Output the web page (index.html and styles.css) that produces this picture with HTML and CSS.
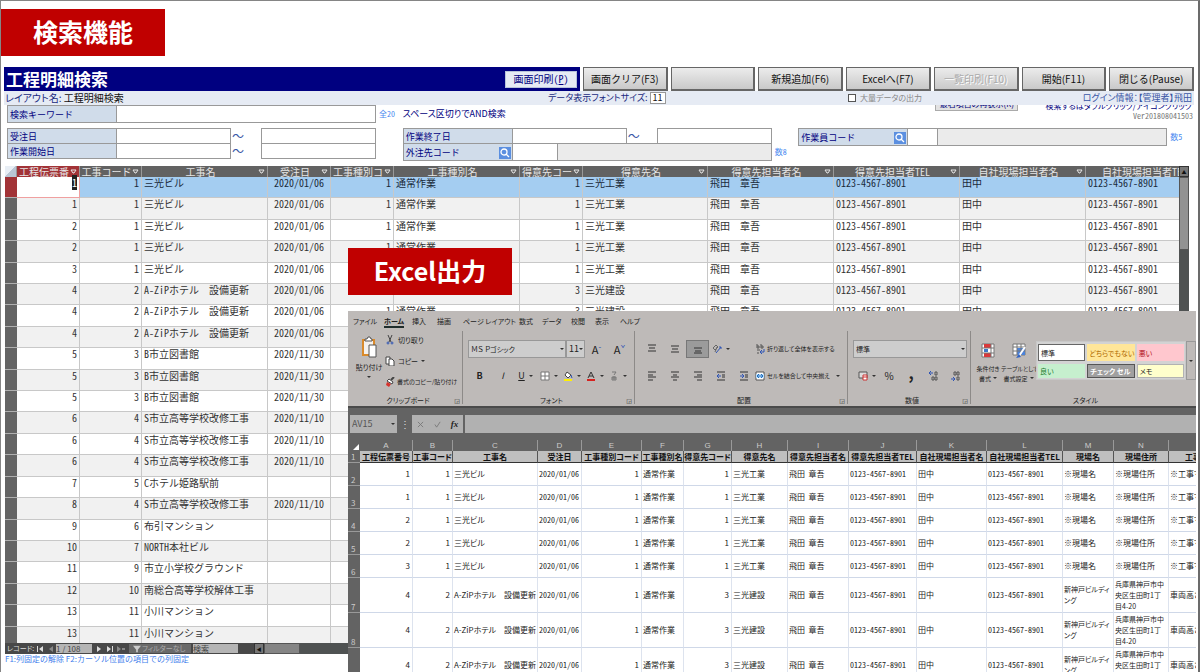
FILE: index.html
```html
<!DOCTYPE html>
<html lang="ja">
<head>
    <meta charset="UTF-8">
    <meta name="viewport" content="width=device-width, initial-scale=1.0">
    <title>工程明細検索</title>
    <link rel="stylesheet" href="styles.css">
</head>
<body>
<div class="slide">
    <h1 class="banner">検索機能</h1>

    <main class="app">
        <header class="top">
            <div class="title-bar">
                <h2>工程明細検索</h2>
                <button class="print" type="button">画面印刷(<u>P</u>)</button>
            </div>
            <div class="commands">
                <button type="button">画面クリア(F3)</button>
                <button type="button" aria-label="未設定"></button>
                <button type="button">新規追加(F6)</button>
                <button type="button">Excelへ(F7)</button>
                <button type="button" disabled>一覧印刷(F10)</button>
                <button type="button">開始(F11)</button>
                <button type="button">閉じる(Pause)</button>
            </div>
        </header>

        <div class="info">
            <div class="layout-name">レイアウト名: <b>工程明細検索</b></div>
            <label class="font-size">データ表示フォントサイズ: <input type="text" value="11"></label>
            <label class="bulk"><input type="checkbox">大量データの出力</label>
            <div class="login">ログイン情報：【管理者】飛田</div>
        </div>

        <form class="search">
            <div class="field keyword">
                <label class="name" for="keyword">検索キーワード</label>
                <input class="box" id="keyword" type="text">
                <span class="note">全20</span>
            </div>
            <p class="hint">スペース区切りでAND検索</p>
            <div class="side">
                <div class="cut">
                    <button type="button">最右項目の再表示(R)</button>
                    <span>検索するはダブルクリック/アイコンクリック</span>
                </div>
                <p class="version">Ver201808041503</p>
            </div>

            <div class="fields">
                <div class="field range">
                    <label class="name" for="order1">受注日</label>
                    <input class="box" id="order1" type="text"><span>～</span>
                    <input class="box" type="text" aria-label="受注日（終了）">
                </div>
                <div class="field range">
                    <label class="name" for="start1">作業開始日</label>
                    <input class="box" id="start1" type="text"><span>～</span>
                    <input class="box" type="text" aria-label="作業開始日（終了）">
                </div>
            </div>
            <div class="fields">
                <div class="field range">
                    <label class="name" for="end1">作業終了日</label>
                    <input class="box" id="end1" type="text"><span>～</span>
                    <input class="box" type="text" aria-label="作業終了日（終了）">
                </div>
                <div class="field code">
                    <div class="name"><label for="vendor">外注先コード</label>
                        <button class="find" type="button" aria-label="外注先を検索"><svg viewBox="0 0 12 12"><circle cx="5" cy="5" r="3"/><path d="M7 7l3 3"/></svg></button>
                    </div>
                    <input class="box" id="vendor" type="text">
                    <input class="box" type="text" readonly aria-label="外注先名">
                    <span class="note">数8</span>
                </div>
            </div>
            <div class="fields">
                <div class="field code worker">
                    <div class="name"><label for="worker">作業員コード</label>
                        <button class="find" type="button" aria-label="作業員を検索"><svg viewBox="0 0 12 12"><circle cx="5" cy="5" r="3"/><path d="M7 7l3 3"/></svg></button>
                    </div>
                    <input class="box" id="worker" type="text">
                    <input class="box" type="text" readonly aria-label="作業員名">
                    <span class="note">数5</span>
                </div>
            </div>
        </form>

        <section class="datasheet">
            <div class="sheet-view">
                <table class="records">
                    <colgroup>
                        <col class="w12"><col class="w63"><col class="w62"><col class="w126"><col class="w63"><col class="w63"><col class="w126">
                        <col class="w63"><col class="w125"><col class="w126"><col class="w126"><col class="w126"><col class="w126">
                    </colgroup>
                    <thead><tr id="record-head"></tr></thead>
                    <tbody id="record-body"></tbody>
                </table>
            </div>
            <div class="vscroll"><i>▲</i><b></b></div>
        </section>

        <div class="navigator">
            <span class="rec">レコード:</span>
            <button type="button" aria-label="先頭"><svg viewBox="0 0 8 8"><path d="M1 1h1v6H1zM7 1v6L3 4z"/></svg></button>
            <button type="button" aria-label="前へ" disabled><svg viewBox="0 0 8 8"><path d="M6 1v6L2 4z"/></svg></button>
            <input class="pos" type="text" value="1 / 108" aria-label="レコード番号">
            <button type="button" aria-label="次へ"><svg viewBox="0 0 8 8"><path d="M2 1v6l4-3z"/></svg></button>
            <button type="button" aria-label="最後"><svg viewBox="0 0 8 8"><path d="M1 1v6l4-3zM6 1h1v6H6z"/></svg></button>
            <button type="button" aria-label="新規" disabled><svg viewBox="0 0 8 8"><path d="M0 1v6l4-3zM5 3h3v2H5z"/></svg></button>
            <button class="filter" type="button"><svg viewBox="0 0 10 8"><path d="M0 0h10L6 5v3H4V5z"/></svg>フィルターなし</button>
            <input class="seek" type="text" value="検索" aria-label="レコードの検索">
            <div class="hscroll"><i>◀</i><b></b></div>
        </div>
        <p class="keys">F1:列固定の解除 F2:カーソル位置の項目での列固定</p>
    </main>

    <section class="excel">
        <nav class="tabs">
            <a href="#">ファイル</a><a href="#" class="on">ホーム</a><a href="#">挿入</a><a href="#">描画</a><a href="#">ページ レイアウト</a><a href="#">数式</a><a href="#">データ</a><a href="#">校閲</a><a href="#">表示</a><a href="#">ヘルプ</a>
        </nav>

        <div class="ribbon">
            <div class="group clipboard">
                <button class="paste" type="button">
                    <svg viewBox="0 0 16 22"><rect x="2" y="4" width="11" height="15" fill="#f4f1ee" stroke="#d98a2b" stroke-width="2"/><path d="M4 5V3h2l1-2h2l1 2h1v2z" fill="#fff" stroke="#555"/><path d="M8 9h7v12H8z" fill="#fff" stroke="#555"/></svg>
                    <span>貼り付け</span>
                    <em class="caret"></em>
                </button>
                <div class="stack">
                    <button type="button"><svg viewBox="0 0 10 10"><path d="M3 0l3 7M7 0L4 7" stroke="#444"/><circle cx="3" cy="8" r="1" stroke="#2f55b5"/><circle cx="7" cy="8" r="1" stroke="#2f55b5"/></svg>切り取り</button>
                    <button type="button"><svg viewBox="0 0 10 10"><path d="M1 1h4v7H1z" fill="#fff" stroke="#444"/><path d="M4 3h3l2 2v5H4z" fill="#fff" stroke="#444"/></svg>コピー<em class="caret"></em></button>
                    <button type="button" class="long"><svg viewBox="0 0 10 10"><path d="M6 3l3-3" stroke="#444" stroke-width="2"/><path d="M4 2l4 3-1 2-5-3z" fill="#fff" stroke="#444"/><path d="M2 5l4 2-2 3-3-2z" fill="#d6322d"/></svg>書式のコピー/貼り付け</button>
                </div>
                <div class="caption">クリップボード</div>
            </div>

            <div class="group">
                <div class="row fonts">
                    <span class="combo face"><select aria-label="フォント"><option>ＭＳ Ｐゴシック</option></select><em class="caret"></em></span>
                    <span class="combo size"><select aria-label="フォント サイズ"><option>11</option></select><em class="caret"></em></span>
                    <button class="letter" type="button" aria-label="拡大">A<sup>ˆ</sup></button>
                    <button class="letter" type="button" aria-label="縮小">A<sup>ˇ</sup></button>
                </div>
                <div class="row tools">
                    <button type="button"><b>B</b></button>
                    <button type="button"><i>I</i></button>
                    <button type="button"><u>U</u><em class="caret"></em></button>
                    <button type="button" aria-label="罫線"><svg viewBox="0 0 10 10"><path d="M1 1h8v8H1z" fill="#fff" stroke="#777"/><path d="M5 1v8M1 5h8" stroke="#777"/></svg><em class="caret"></em></button>
                    <button type="button" aria-label="塗りつぶし"><svg viewBox="0 0 10 10"><path d="M4 1l4 3-3 3-3-3z" fill="#fff" stroke="#444"/><path d="M8 4l1 3" stroke="#2f55b5"/><path d="M1 8h8v2H1z" fill="#fff000"/></svg><em class="caret"></em></button>
                    <button type="button" aria-label="文字の色"><svg viewBox="0 0 10 10"><path d="M2 7l3-6 3 6M3 5h4" stroke="#333"/><path d="M1 8h8v2H1z" fill="#d6221f"/></svg><em class="caret"></em></button>
                    <button type="button" aria-label="ふりがな"><svg viewBox="0 0 10 10"><path d="M3 1h4L5 4M3 6h4v3H3zM5 5v4M3 7h4" stroke="#777"/></svg><em class="caret"></em></button>
                </div>
                <div class="caption">フォント</div>
            </div>

            <div class="group align">
                <div class="row tools">
                    <button type="button" aria-label="上揃え"><svg viewBox="0 0 10 10"><path d="M1 1h8M2 4h6M1 7h8" stroke="#333"/></svg></button>
                    <button type="button" aria-label="中央揃え"><svg viewBox="0 0 10 10"><path d="M1 2h8M2 5h6M1 8h8" stroke="#333"/></svg></button>
                    <button type="button" class="down" aria-label="下揃え"><svg viewBox="0 0 10 10"><path d="M1 4h8M2 7h6M1 9h8" stroke="#333"/></svg></button>
                    <button type="button" aria-label="方向"><svg viewBox="0 0 10 10"><path d="M1 4l3-3 2 2-3 3zM3 8l2-5" stroke="#666"/><path d="M4 9l5-6M7 3h2v2" stroke="#2f55b5"/></svg><em class="caret"></em></button>
                    <span></span>
                    <button type="button" class="long"><svg viewBox="0 0 10 10"><path d="M2 0v4h2V2H2M6 0v4h2V2H6M2 6h3M2 9h2" stroke="#555"/><path d="M9 5v3H5m2-2L5 8l2 2" stroke="#2f55b5"/></svg>折り返して全体を表示する</button>
                </div>
                <div class="row tools">
                    <button type="button" aria-label="左揃え"><svg viewBox="0 0 10 10"><path d="M1 1h8M1 4h5M1 6h8M1 9h5" stroke="#333"/></svg></button>
                    <button type="button" aria-label="左右中央揃え"><svg viewBox="0 0 10 10"><path d="M1 1h8M3 4h4M1 6h8M3 9h4" stroke="#333"/></svg></button>
                    <button type="button" aria-label="右揃え"><svg viewBox="0 0 10 10"><path d="M1 1h8M4 4h5M1 6h8M4 9h5" stroke="#333"/></svg></button>
                    <button type="button" aria-label="インデントを減らす"><svg viewBox="0 0 10 10"><path d="M1 1h8M6 4h3M6 6h3M1 9h8" stroke="#333"/><path d="M5 5H1m2-2L1 5l2 2" stroke="#2f55b5"/></svg></button>
                    <button type="button" aria-label="インデントを増やす"><svg viewBox="0 0 10 10"><path d="M1 1h8M6 4h3M6 6h3M1 9h8" stroke="#333"/><path d="M1 5h4M3 3l2 2-2 2" stroke="#2f55b5"/></svg></button>
                    <button type="button" class="long"><svg viewBox="0 0 10 10"><path d="M1 1h8v8H1z" fill="#fff" stroke="#555"/><path d="M1 3h8v4H1z" fill="#bcdcf7"/><path d="M2 5h6M4 3L2 5l2 2M6 3l2 2-2 2" stroke="#1f6fc0"/></svg>セルを結合して中央揃え<em class="caret far"></em></button>
                </div>
                <div class="caption">配置</div>
            </div>

            <div class="group number">
                <div class="row">
                    <span class="combo format"><select aria-label="表示形式"><option>標準</option></select><em class="caret"></em></span>
                </div>
                <div class="row tools">
                    <button type="button" aria-label="通貨"><svg viewBox="0 0 10 10"><path d="M1 1h8v6H1z" fill="#ddd" stroke="#555"/><path d="M5 4h4v5H5zM5 6h4" fill="#fff" stroke="#c33"/></svg><em class="caret"></em></button>
                    <button type="button" class="sign">%</button>
                    <button type="button" class="sign comma">,</button>
                    <button type="button" aria-label="小数点以下を増やす"><svg viewBox="0 0 10 10"><path d="M5 2H1m2-2L1 2l2 2" stroke="#2f55b5"/><path d="M7 1h2v3H7zM4 6h2v3H4zM7 6h2v3H7z" stroke="#555"/></svg></button>
                    <button type="button" aria-label="小数点以下を減らす"><svg viewBox="0 0 10 10"><path d="M4 1h2v3H4zM7 1h2v3H7zM7 6h2v3H7z" stroke="#555"/><path d="M1 8h4M3 6l2 2-2 2" stroke="#2f55b5"/></svg></button>
                </div>
                <div class="caption">数値</div>
            </div>

            <div class="group styles">
                <button type="button" class="big"><svg viewBox="0 0 14 15"><path d="M1 1h12v13H1z" fill="#fff" stroke="#777"/><path d="M3 1h7v4H3zM3 10h7v4H3z" fill="#d8393b"/><path d="M3 6h4v3H3z" fill="#3e79c9"/><path d="M1 5h12M1 10h12M10 1v13" stroke="#777"/></svg>条件付き<br>書式<em class="caret"></em></button>
                <button type="button" class="big"><svg viewBox="0 0 14 15"><path d="M1 1h12v11H1z" fill="#fff" stroke="#777"/><path d="M5 5h8v7H5z" fill="#4a83dc"/><path d="M1 4h12M1 8h12M5 1v11M9 1v11" stroke="#777"/><path d="M13 4l-6 9" stroke="#fff" stroke-width="2"/><path d="M7 11l-3 4 5-1z" fill="#2f62c4"/></svg>テーブルとして<br>書式設定<em class="caret"></em></button>
                <div class="gallery">
                    <button type="button" class="normal">標準</button>
                    <button type="button" class="neutral">どちらでもない</button>
                    <button type="button" class="bad">悪い</button>
                    <button type="button" class="good">良い</button>
                    <button type="button" class="check">チェック セル</button>
                    <button type="button" class="memo">メモ</button>
                </div>
                <button type="button" class="more" aria-label="その他"><em class="caret"></em></button>
                <div class="caption">スタイル</div>
            </div>
        </div>

        <div class="formula-bar">
            <span class="combo cell-ref"><select aria-label="名前ボックス"><option>AV15</option></select><em class="caret"></em></span>
            <span class="dots">⋮</span>
            <div class="entry">
                <button type="button" aria-label="キャンセル"><svg viewBox="0 0 8 8"><path d="M1 1l6 6M7 1L1 7"/></svg></button>
                <button type="button" aria-label="入力"><svg viewBox="0 0 8 8"><path d="M1 4l2 3 4-6"/></svg></button>
                <button type="button" class="fx">fx</button>
            </div>
            <input type="text" class="formula" aria-label="数式バー">
        </div>

        <table class="book">
            <colgroup id="book-cols"></colgroup>
            <thead><tr id="book-letters"></tr></thead>
            <tbody id="book-body"></tbody>
        </table>
    </section>

    <h1 class="banner over">Excel出力</h1>
</div>
<script src="script.js"></script>
</body>
</html>
```
FILE: styles.css
```css
* {
    box-sizing: border-box;
}
body {
    margin: 0;
    font-family: "Noto Sans Mono CJK JP", "Noto Sans CJK JP", sans-serif;
    font-size: 10px;
    line-height: 12px;
    color: #333;
    background: #fff;
}
h1, h2, p {
    margin: 0;
}
button, input, select {
    font: inherit;
    color: inherit;
    margin: 0;
    padding: 0;
    border-radius: 0;
    min-width: 0;
}
button {
    border: 0;
    background: none;
    white-space: nowrap;
}
svg {
    display: block;
    fill: none;
}
.slide {
    position: relative;
    display: flex;
    flex-direction: column;
    height: 100vh;
    overflow: hidden;
    border: 1px solid #858585;
    border-right: 2px solid #6b6b6b;
    border-bottom: 0;
}
.banner {
    flex: none;
    width: 164px;
    height: 47px;
    margin-top: 8px;
    background: #c00000;
    color: #fff;
    font: bold 25px/44px "Noto Sans CJK JP", sans-serif;
    text-align: center;
}
.banner.over {
    position: absolute;
    left: 347px;
    top: 239px;
}

/* 検索画面 */
.app {
    flex: 1;
    min-height: 0;
    display: flex;
    flex-direction: column;
    padding: 11px 4px 0 3px;
}
.top {
    display: flex;
    gap: 3px;
    height: 24px;
}
.title-bar {
    flex: 1;
    display: flex;
    align-items: center;
    justify-content: space-between;
    padding: 0 3px 0 2px;
    background: #000080;
}
.title-bar h2 {
    color: #fff;
    font: bold 17px/22px "Noto Sans CJK JP", sans-serif;
}
.print {
    width: 72px;
    height: 17px;
    background: #e6ebf4;
    border: 1px solid #b8c4da;
    color: #000080;
    font-size: 10px;
}
.commands {
    flex: 0 0 611px;
    display: grid;
    grid-template-columns: repeat(7, 1fr);
    gap: 3px;
}
.commands button {
    border: 1px solid #666;
    border-width: 1px 2px 2px 1px;
    background: linear-gradient(#ececec, #c9c9c9);
    color: #111;
    font: 10px/20px "Noto Sans CJK JP", sans-serif;
}
.commands button:disabled {
    color: #aaa;
    text-shadow: 1px 1px #fff;
}
.info {
    display: grid;
    grid-template-columns: 544px 300px 1fr auto;
    align-items: center;
    height: 14px;
    padding-right: 2px;
    background: #e6ebf4;
    color: #1a2a80;
    font-family: "Noto Sans CJK JP", sans-serif;
    font-feature-settings: "palt";
}
.info b {
    font-weight: normal;
    color: #111;
}
.layout-name {
    padding-left: 1px;
}
.font-size {
    display: flex;
    font-size: 9px;
    gap: 2px;
}
.font-size input {
    width: 16px;
    height: 12px;
    border: 1px solid #999;
    background: #fff;
    color: #111;
    text-align: center;
}
.bulk {
    display: flex;
    align-items: center;
    gap: 4px;
    color: #888;
    font-size: 8px;
}
.bulk input {
    appearance: none;
    width: 8px;
    height: 8px;
    border: 1px solid #555;
    background: #fff;
}
.login {
    font-size: 9px;
    color: #3a56a5;
}
.search {
    display: grid;
    grid-template-columns: repeat(3, 1fr);
    grid-template-rows: 16px 31px;
    row-gap: 7px;
    padding: 0 0 0 3px;
    color: #000080;
}
.field {
    display: grid;
    grid-template-columns: 109px 260px 1fr;
    height: 16px;
}
.field.range {
    grid-template-columns: 109px 115px 30px 115px;
}
.field.code {
    grid-template-columns: 109px 46px 214px 1fr;
}
.field.worker {
    grid-template-columns: 109px 31px 229px 1fr;
}
.field + .field {
    margin-top: -1px;
}
.field .name {
    display: flex;
    align-items: center;
    justify-content: space-between;
    padding: 1px 1px 0 2px;
    border: 1px solid #999;
    border-right: 0;
    background: #d0dcea;
    font-family: "Noto Sans CJK JP", sans-serif;
    font-size: 9px;
}
.range > span {
    padding-left: 1px;
    color: #3a56a5;
    font-size: 12px;
    font-weight: 300;
    line-height: 16px;
}
.box {
    border: 1px solid #999;
    background: #fff;
}
.box[readonly] {
    margin-left: -1px;
    background: #ebebeb;
}
.note {
    padding-left: 3px;
    color: #4a8af0;
    font-size: 8px;
    line-height: 18px;
}
.find {
    width: 12px;
    height: 12px;
    background: #5b8fe0;
}
.find svg {
    stroke: #fff;
    stroke-width: 1.3;
}
.hint {
    font: 9px/18px "Noto Sans CJK JP", sans-serif;
    font-feature-settings: "palt";
}
.cut {
    display: grid;
    grid-template: 6px / 83px auto;
    justify-content: space-between;
    align-items: end;
    height: 6px;
    margin-left: 137px;
    padding-right: 2px;
    overflow: hidden;
    font-family: "Noto Sans CJK JP", sans-serif;
    font-size: 8px;
    font-feature-settings: "palt";
    line-height: 10px;
    white-space: nowrap;
}
.cut button {
    height: 14px;
    border: 1px solid #aaa;
    background: #e2e2e2;
    line-height: 10px;
}
.version {
    padding-right: 1px;
    color: #777;
    font-size: 8px;
    line-height: 9px;
    text-align: right;
}

/* データシート */
.datasheet {
    flex: 1;
    min-height: 0;
    display: flex;
    margin: 7px 5px 0 1px;
    overflow: hidden;
}
.sheet-view {
    flex: 1;
    overflow: hidden;
}
table {
    border-collapse: separate;
    border-spacing: 0;
    table-layout: fixed;
}
th, td {
    padding: 0;
    white-space: nowrap;
}
.records {
    width: 1207px;
    height: 482px;
}
.w12 { width: 12px; }
.w62 { width: 62px; }
.w63 { width: 63px; }
.w125 { width: 125px; }
.w126 { width: 126px; }
.records thead th {
    height: 11px;
    background: #626262;
    border-right: 1px solid #999;
    color: #e6e6e6;
    font-weight: normal;
    line-height: 11px;
}
.records thead .corner {
    background: linear-gradient(135deg, #e8eef5 50%, #b9c6d4 50%);
}
.records thead .active {
    background: #a23337;
}
.head {
    display: flex;
    align-items: center;
    height: 11px;
    padding: 0 2px 0 1px;
}
.head span {
    flex: 1;
}
.head svg {
    flex: none;
    width: 7px;
    height: 5px;
    stroke: #e6e6e6;
}
.records td {
    padding: 0 2px;
    border-right: 1px solid #c8c8c8;
    border-bottom: 1px solid #c8c8c8;
    vertical-align: top;
}
.records tbody th {
    background: #646464;
    border-bottom: 1px solid #b0b0b0;
}
.records tr:nth-child(even) td {
    background: #f1f1f1;
}
.records .current td {
    background: #a4cdf1;
    color: #1a2a3a;
}
.records .current th {
    background: #a23337;
}
.records .current .focus {
    background: #fff;
    border: 1px solid #f0a0a0;
    border-top: 0;
    border-left: 0;
}
.focus mark {
    background: #222;
    color: #fff;
}
.records .num {
    text-align: right;
}
.records .date {
    text-align: center;
}
.vscroll {
    display: flex;
    flex-direction: column;
    width: 10px;
    background: #4f5252;
}
.vscroll i, .hscroll i {
    height: 11px;
    color: #111;
    background: #777;
    border: 1px solid #333;
    font-size: 5px;
    font-style: normal;
    line-height: 9px;
    text-align: center;
}
.vscroll b {
    height: 73px;
    background: #929292;
    border: 1px solid #555;
}
.navigator {
    display: flex;
    align-items: center;
    height: 11px;
    margin: 0 5px 0 1px;
    background: #484848;
    color: #ddd;
    font-family: "Noto Sans CJK JP", sans-serif;
    font-size: 8px;
    font-feature-settings: "palt";
    line-height: 11px;
    white-space: nowrap;
}
.navigator svg {
    width: 8px;
    height: 8px;
    margin: auto;
    fill: #ddd;
}
.navigator button {
    flex: none;
    width: 11px;
}
.navigator button:disabled svg {
    fill: #888;
}
.navigator .rec {
    flex: none;
    width: 29px;
    padding-left: 2px;
    font-size: 7px;
}
.navigator input {
    height: 9px;
    border: 0;
    background: #b5b5b5;
    color: #444;
}
.pos {
    flex: none;
    width: 36px;
    margin-right: 1px;
}
.navigator .filter {
    display: flex;
    gap: 1px;
    align-items: center;
    width: 62px;
    height: 9px;
    margin: 0 2px 0 3px;
    padding-left: 4px;
    background: #6a6a6a;
    color: #aaa;
    font-size: 7px;
    line-height: 9px;
}
.navigator .filter svg {
    flex: none;
    margin: 0;
    fill: #ccc;
}
.seek {
    flex: none;
    width: 45px;
}
.hscroll {
    flex: 1;
    display: flex;
    margin-left: 16px;
    background: #4f5252;
}
.hscroll i {
    width: 10px;
}
.hscroll b {
    width: 36px;
    background: #858585;
    border: 1px solid #555;
}
.keys {
    height: 18px;
    padding-left: 1px;
    color: #3f80ec;
    font-family: "Noto Sans CJK JP", sans-serif;
    font-size: 8px;
    line-height: 10px;
}

/* Excel ウィンドウ */
.excel {
    position: absolute;
    left: 347px;
    right: 2px;
    top: 310px;
    bottom: 0;
    overflow: hidden;
    background: #fff;
    font-family: "Noto Sans CJK JP", sans-serif;
    font-size: 8px;
    line-height: 10px;
}
.tabs {
    display: grid;
    grid-template-columns: 31px 28px 25px 26px 56px 23px 29px 24px 25px auto;
    align-items: center;
    height: 20px;
    padding-left: 5px;
    background: #bebab8;
    font-size: 7px;
    font-feature-settings: "palt";
    white-space: nowrap;
}
.tabs a {
    justify-self: start;
    padding-top: 1px;
    color: #222;
    text-decoration: none;
    border-bottom: 2px solid transparent;
}
.tabs .on {
    font-weight: bold;
    border-color: #1f2d2b;
}
.ribbon {
    display: grid;
    grid-template-columns: 115px 172px 213px 123px 1fr;
    height: 77px;
    background: #bebab8;
    border-bottom: 2px solid #4a4a4a;
    color: #222;
    font-size: 7px;
    font-feature-settings: "palt";
}
.group {
    position: relative;
    display: grid;
    grid-template: 36px 18px 20px / minmax(0, 1fr);
    padding-left: 5px;
}
.group:not(.styles)::after {
    content: "";
    position: absolute;
    right: 0;
    top: 0;
    bottom: 2px;
    border-right: 1px solid #8d8a88;
}
.group:not(.styles) .caption::after {
    content: "◲";
    position: absolute;
    right: 3px;
    bottom: 1px;
    font: 6px/8px "DejaVu Sans", sans-serif;
}
.caption {
    align-self: end;
    justify-self: center;
    line-height: 10px;
}
.group svg {
    flex: none;
    width: 10px;
    height: 10px;
}
.caret {
    flex: none;
    width: 0;
    height: 0;
    border: 2px solid transparent;
    border-top-color: #333;
    border-bottom: 0;
}
.caret.far {
    margin-left: 4px;
}
.row {
    display: flex;
    align-items: center;
}
.row.tools {
    display: grid;
    grid-template-columns: repeat(7, 23px);
}
.row button, .stack button {
    display: flex;
    align-items: center;
    justify-content: center;
    gap: 4px;
    height: 18px;
    font-size: 9px;
}
.row.tools .long, .stack .long {
    justify-content: start;
    gap: 2px;
    font-size: 6px;
}
.align .row.tools {
    grid-template-columns: repeat(5, 23px) 1fr;
}
.align .down {
    background: #9b9b9b;
    border: 1px solid #777;
}
.combo {
    position: relative;
    display: inline-block;
    height: 18px;
}
.combo select {
    appearance: none;
    display: block;
    width: 100%;
    height: 100%;
    padding-left: 2px;
    border: 1px solid #989898;
    background: #cdcdcd;
}
.combo .caret {
    position: absolute;
    right: 2px;
    top: 8px;
}
.face { width: 98px; }
.size { width: 19px; font-size: 9px; }
.row .letter {
    width: 23px;
    gap: 0;
    font-size: 11px;
}
.letter sup {
    color: #2f55b5;
    font-size: 8px;
    line-height: 8px;
}
.number .row:first-child {
    padding-right: 4px;
}
.number .row.tools {
    grid-template-columns: repeat(5, 22px);
    padding: 0 0 0 3px;
}
.number .format {
    flex: 1;
}
.row .sign {
    font-size: 10px;
}
.row .comma {
    padding-bottom: 8px;
    font-weight: bold;
    font-size: 16px;
}
.clipboard {
    grid-template: 58px 16px / 32px 1fr;
}
.clipboard .caption, .styles .caption {
    grid-column: 1 / -1;
}
.paste {
    display: flex;
    flex-direction: column;
    align-items: center;
    gap: 4px;
    padding-top: 5px;
}
.group .paste svg {
    width: 16px;
    height: 22px;
}
.stack {
    display: grid;
    grid-template-rows: 21px 21px 18px;
    justify-items: start;
}
.stack button {
    font-size: 7px;
    gap: 3px;
}
.styles {
    grid-template: 58px 16px / 26px 35px 150px 1fr;
    padding-left: 4px;
}
.big {
    padding-top: 6px;
    font-size: 6px;
    line-height: 10px;
    text-align: center;
}
.group .big svg {
    width: 14px;
    height: 15px;
    margin: 0 auto 6px;
}
.big .caret {
    display: inline-block;
    margin: 0 0 2px 2px;
}
.gallery {
    display: grid;
    grid-template: 17px 14px / repeat(3, minmax(0, 1fr));
    gap: 3px 2px;
    height: 39px;
    margin-top: 10px;
    padding: 2px 1px;
    background: #d3d3d3;
    border: 1px solid #c8c8c8;
}
.gallery button {
    padding-left: 2px;
    text-align: left;
}
.normal { background: #fff; border: 1px solid #666; }
.neutral { background: #ffe699; color: #b06a00; }
.bad { background: #ffc7ce; color: #b01020; }
.good { background: #c6efce; color: #1a7a2a; }
.check { background: #a0a0a0; border: 1px solid #555; color: #fff; font-weight: bold; }
.memo { background: #ffffcc; border: 1px solid #b2b2b2; }
.more {
    height: 39px;
    margin-top: 10px;
    border: 1px solid #999;
    display: grid;
    place-items: center;
}
.formula-bar {
    display: grid;
    grid-template-columns: 47px 15px 51px 1fr;
    align-items: center;
    height: 32px;
    padding: 0 0 0 2px;
    background: #636363;
    color: #555;
}
.cell-ref {
    font-size: 9px;
}
.formula-bar select, .entry, .formula {
    height: 18px;
    border: 0;
    background: #b1b1b1;
}
.dots {
    color: #ddd;
    font-size: 10px;
    text-align: center;
}
.entry {
    display: grid;
    grid-template-columns: repeat(3, 1fr);
    align-items: center;
}
.entry svg {
    width: 7px;
    height: 7px;
    margin: auto;
    stroke: #777;
}
.fx {
    color: #222;
    font: italic bold 9px/12px "Liberation Serif", serif;
}
.formula {
    width: auto;
    margin-left: 2px;
}
.book {
    width: 892px;
    font-feature-settings: "palt";
}
.book thead th {
    height: 11px;
    background: #636363;
    border-right: 1px solid #999;
    color: #ccc;
    font: 8px/11px "Liberation Sans", sans-serif;
}
.book thead th:first-child {
    border: 0;
}
.book thead svg {
    width: 6px;
    height: 6px;
    margin: 3px 0 0 5px;
    fill: #fff;
}
.book tbody th {
    background: #636363;
    border-bottom: 1px solid #999;
    color: #ccc;
    font-weight: normal;
    vertical-align: bottom;
    text-align: left;
    padding-left: 3px;
}
.book td {
    height: 23px;
    padding: 0 2px 0 1px;
    border-right: 1px solid #dde3ee;
    border-bottom: 1px solid #cfd8e8;
    color: #222;
}
.book .tall td {
    height: 35px;
}
.book .titles td {
    height: 12px;
    padding: 0;
    background: #bfbfbf;
    border-right-color: #555;
    border-bottom: 1px solid #333;
    color: #111;
    font-weight: bold;
    text-align: center;
}
.book .num {
    text-align: right;
}
.book .tel {
    font-family: "Noto Sans Mono CJK JP", "Noto Sans CJK JP", monospace;
}
.book .tall .wrap {
    font-size: 7px;
    line-height: 11px;
}
```
FILE: script.js
```javascript
const heads = ['工程伝票番', '工事コード', '工事名', '受注日', '工事種別コ', '工事種別名', '得意先コー',
    '得意先名', '得意先担当者名', '得意先担当者TEL', '自社現場担当者名', '自社現場担当者TEL'];
const tel = '0123-4567-8901';

// 伝票番号, 工事コード, 工事名, 受注日
const works = [
    [1, 1, '三光ビル', '2020/01/06'],
    [1, 1, '三光ビル', '2020/01/06'],
    [2, 1, '三光ビル', '2020/01/06'],
    [2, 1, '三光ビル', '2020/01/06'],
    [3, 1, '三光ビル', '2020/01/06'],
    [4, 2, 'A-ZiPホテル　設備更新', '2020/01/06'],
    [4, 2, 'A-ZiPホテル　設備更新', '2020/01/06'],
    [4, 2, 'A-ZiPホテル　設備更新', '2020/01/06'],
    [5, 3, 'B市立図書館', '2020/11/30'],
    [5, 3, 'B市立図書館', '2020/11/30'],
    [5, 3, 'B市立図書館', '2020/11/30'],
    [6, 4, 'S市立高等学校改修工事', '2020/11/10'],
    [6, 4, 'S市立高等学校改修工事', '2020/11/10'],
    [6, 4, 'S市立高等学校改修工事', '2020/11/10'],
    [7, 5, 'Cホテル姫路駅前', ''],
    [8, 4, 'S市立高等学校改修工事', '2020/11/10'],
    [9, 6, '布引マンション', ''],
    [10, 7, 'NORTH本社ビル', ''],
    [11, 9, '市立小学校グラウンド', ''],
    [12, 10, '南総合高等学校解体工事', ''],
    [13, 11, '小川マンション', ''],
    [13, 11, '小川マンション', '']
];

const mark = '<svg viewBox="0 0 7 5"><path d="M1 1h5L4 4H3z"/></svg>';
document.getElementById('record-head').innerHTML = '<th class="corner"></th>' + heads.map((h, i) =>
    `<th${i === 0 ? ' class="active"' : ''}><div class="head"><span>${h}</span>${mark}</div></th>`).join('');

// 7行目以降の右側の列は Excel ウィンドウの下になる
document.getElementById('record-body').innerHTML = works.map((w, i) => {
    const id = i === 0 ? `<td class="num focus"><mark>${w[0]}</mark></td>` : `<td class="num">${w[0]}</td>`;
    const rest = i > 6 ? '<td></td>'.repeat(8) :
        `<td class="num">1</td><td>通常作業</td><td class="num">${w[1] === 1 ? 1 : 3}</td>
        <td>${w[1] === 1 ? '三光工業' : '三光建設'}</td><td>飛田　章吾</td><td>${tel}</td><td>田中</td><td>${tel}</td>`;
    return `<tr${i === 0 ? ' class="current"' : ''}><th></th>${id}<td class="num">${w[1]}</td>
        <td>${w[2]}</td><td class="date">${w[3]}</td>${rest}</tr>`;
}).join('');

const widths = [12, 53, 40, 85, 44, 60, 42, 48, 56, 61, 68, 70, 76, 51, 55, 71];
const titles = ['工程伝票番号', '工事コード', '工事名', '受注日', '工事種別コード', '工事種別名', '得意先コード', '得意先名',
    '得意先担当者名', '得意先担当者TEL', '自社現場担当者名', '自社現場担当者TEL', '現場名', '現場住所', '工事マスタ'];

document.getElementById('book-cols').innerHTML = widths.map(w => `<col style="width:${w}px">`).join('');
document.getElementById('book-letters').innerHTML = '<th><svg viewBox="0 0 6 6"><path d="M6 0v6H0z"/></svg></th>' +
    [...'ABCDEFGHIJKLMNO'].map(c => `<th>${c}</th>`).join('');

document.getElementById('book-body').innerHTML =
    `<tr class="titles"><th>1</th>${titles.map(t => `<td>${t}</td>`).join('')}</tr>` +
    works.slice(0, 8).map((w, i) => {
        const tall = w[1] === 2;
        return `<tr${tall ? ' class="tall"' : ''}><th>${i + 2}</th><td class="num">${w[0]}</td><td class="num">${w[1]}</td>
            <td>${w[2]}</td><td class="num tel">${w[3]}</td><td class="num">1</td><td>通常作業</td>
            <td class="num">${tall ? 3 : 1}</td><td>${tall ? '三光建設' : '三光工業'}</td><td>飛田&nbsp; 章吾</td>
            <td class="tel">${tel}</td><td>田中</td><td class="tel">${tel}</td>
            <td class="wrap">${tall ? '新神戸ビルディ<br>ング' : '※現場名'}</td>
            <td class="wrap">${tall ? '兵庫県神戸市中<br>央区生田町1丁<br>目4-20' : '※現場住所'}</td>
            <td>${tall ? '車両高さ' : '※工事マスタ'}</td></tr>`;
    }).join('');
```
